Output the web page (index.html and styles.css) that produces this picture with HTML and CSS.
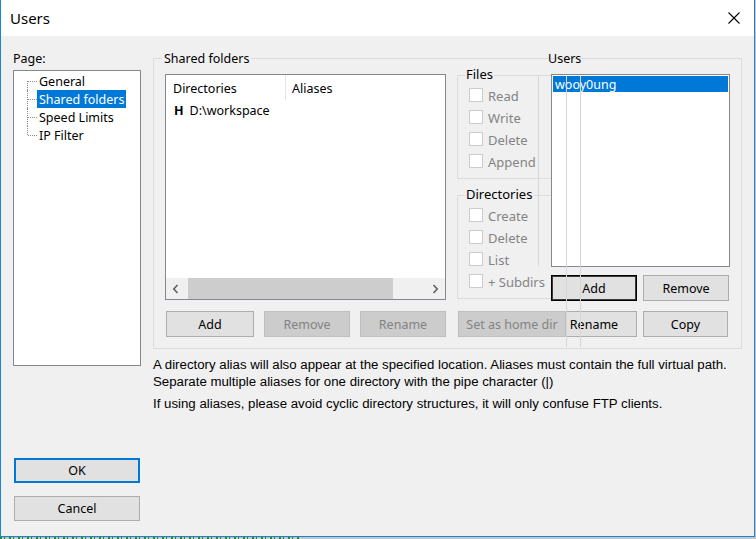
FILE: index.html
```html
<!DOCTYPE html>
<html>
<head>
<meta charset="utf-8">
<title>Users</title>
<link rel="stylesheet" href="styles.css">
</head>
<body>
<div class="window">
  <div class="titlebar">
    <span class="title">Users</span>
    <svg class="close" width="12" height="12" viewBox="0 0 12 12"><path d="M0.5 0.5 L11.5 11.5 M11.5 0.5 L0.5 11.5" stroke="#000" stroke-width="1.1" fill="none"/></svg>
  </div>
  <div class="body">
    <div class="leftcol">
      <div class="page-label">Page:</div>
      <div class="tree">
        <div class="tree-item first"><span class="branch"></span><span class="tree-text">General</span></div>
        <div class="tree-item"><span class="branch"></span><span class="tree-text selected">Shared folders</span></div>
        <div class="tree-item"><span class="branch"></span><span class="tree-text">Speed Limits</span></div>
        <div class="tree-item last"><span class="branch"></span><span class="tree-text">IP Filter</span></div>
      </div>
      <button class="btn btn-ok">OK</button>
      <button class="btn btn-cancel">Cancel</button>
    </div>
    <div class="rightcol">
      <div class="group shared">
        <span class="group-title">Shared folders</span>
        <span class="users-title">Users</span>
        <div class="cols">
          <div class="col-dirs">
            <div class="listview">
              <div class="lv-header">
                <div class="lv-col lv-col1">Directories</div>
                <div class="lv-col lv-col2">Aliases</div>
              </div>
              <div class="lv-row"><b class="home">H</b><span>D:\workspace</span></div>
              <div class="lv-spacer"></div>
              <div class="hscroll">
                <div class="sb-arrow"><svg width="8" height="10" viewBox="0 0 8 10"><path d="M5.5 1 L1.8 5 L5.5 9" stroke="#606060" stroke-width="1.6" fill="none"/></svg></div>
                <div class="sb-thumb"></div>
                <div class="sb-track"></div>
                <div class="sb-arrow"><svg width="8" height="10" viewBox="0 0 8 10"><path d="M2.5 1 L6.2 5 L2.5 9" stroke="#606060" stroke-width="1.6" fill="none"/></svg></div>
              </div>
            </div>
            <div class="btn-row">
              <button class="btn w88">Add</button>
              <button class="btn w86" disabled>Remove</button>
              <button class="btn w86" disabled>Rename</button>
            </div>
          </div>
          <div class="col-perm">
            <div class="group perm files">
              <span class="perm-title">Files</span>
              <div class="checks">
                <div class="check"><span class="box"></span><span class="check-label">Read</span></div>
                <div class="check"><span class="box"></span><span class="check-label">Write</span></div>
                <div class="check"><span class="box"></span><span class="check-label">Delete</span></div>
                <div class="check"><span class="box"></span><span class="check-label">Append</span></div>
              </div>
            </div>
            <div class="group perm dirs">
              <span class="perm-title">Directories</span>
              <div class="checks">
                <div class="check"><span class="box"></span><span class="check-label">Create</span></div>
                <div class="check"><span class="box"></span><span class="check-label">Delete</span></div>
                <div class="check"><span class="box"></span><span class="check-label">List</span></div>
                <div class="check"><span class="box"></span><span class="check-label">+ Subdirs</span></div>
              </div>
            </div>
            <button class="btn btn-home" disabled>Set as home dir</button>
          </div>
          <div class="col-users">
            <div class="users-list">
              <div class="user-item">wooy0ung</div>
            </div>
            <div class="urow">
              <button class="btn w86 btn-default">Add</button>
              <button class="btn w86">Remove</button>
            </div>
            <div class="urow urow2">
              <button class="btn w86">Rename</button>
              <button class="btn w85">Copy</button>
            </div>
          </div>
        </div>
        <span class="glitch g1"></span>
        <span class="glitch g2"></span>
        <span class="glitch g3"></span>
      </div>
      <div class="notes">
        <p>A directory alias will also appear at the specified location. Aliases must contain the full virtual path.<br>Separate multiple aliases for one directory with the pipe character (|)</p>
        <p class="p2">If using aliases, please avoid cyclic directory structures, it will only confuse FTP clients.</p>
      </div>
    </div>
  </div>
</div>
<div class="console"></div>
</body>
</html>
```

FILE: styles.css
```css
* { box-sizing: border-box; }
html, body { margin: 0; padding: 0; }
body {
  width: 756px;
  height: 539px;
  overflow: hidden;
  background: #c6c6c6;
  font-family: "Noto Sans", "Liberation Sans", sans-serif;
  font-size: 12.5px;
  color: #000;
}
.window {
  width: 755px;
  height: 537px;
  border: 1px solid #1883d7;
  border-top: none;
  background: #f0f0f0;
  display: flex;
  flex-direction: column;
}
.titlebar {
  height: 36px;
  flex: 0 0 36px;
  background: #fff;
  display: flex;
  align-items: center;
  justify-content: space-between;
  padding: 0 14px 0 9px;
}
.title { font-size: 15px; line-height: 20px; }
.close { display: block; }

.body {
  flex: 1;
  display: flex;
  padding: 14px 0 0 12px;
}
.leftcol {
  width: 128px;
  margin-right: 12px;
  display: flex;
  flex-direction: column;
  align-items: flex-start;
}
.page-label { height: 17px; line-height: 16px; padding-top: 1px; }
.tree {
  margin-top: 3px;
  width: 128px;
  height: 296px;
  background: #fff;
  border: 1px solid #828790;
  padding-top: 1px;
}
.tree-item {
  height: 18px;
  display: flex;
  align-items: center;
  padding-left: 13px;
}
.branch {
  position: relative;
  width: 10px;
  height: 18px;
  flex: 0 0 10px;
}
.branch::before {
  content: "";
  position: absolute;
  left: 0; top: 0; bottom: 0;
  border-left: 1px dotted #8a8a8a;
}
.tree-item.first .branch::before { top: 9px; }
.tree-item.last .branch::before { bottom: 9px; }
.branch::after {
  content: "";
  position: absolute;
  left: 1px; top: 9px;
  width: 9px;
  border-top: 1px dotted #8a8a8a;
}
.tree-text {
  padding: 1px 2px 0;
  line-height: 17px;
  height: 18px;
  white-space: nowrap;
}
.tree-text.selected { background: #0078d7; color: #fff; }

.btn {
  position: relative;
  z-index: 2;
  font-family: "Noto Sans", "Liberation Sans", sans-serif;
  font-size: 12.5px;
  color: #000;
  background: #e1e1e1;
  border: 1px solid #adadad;
  height: 26px;
  padding: 2px 0 0;
  margin: 0;
  line-height: 1;
}
.btn:disabled { background: #cccccc; border-color: #bfbfbf; color: #838383; }
.btn-ok {
  width: 126px;
  height: 25px;
  margin: 92px 0 0 1px;
  border: 2px solid #0078d7;
}
.btn-cancel {
  width: 126px;
  height: 25px;
  margin: 13px 0 0 1px;
}
.btn-default { border: 1px solid #000; box-shadow: inset 0 0 0 1px #3a3a3a; }
.w88 { width: 88px; }
.w86 { width: 86px; }
.w85 { width: 85px; }

.rightcol { width: 589px; display: flex; flex-direction: column; }
.group { border: 1px solid #dcdcdc; position: relative; }
.shared {
  margin-top: 8px;
  height: 291px;
  padding: 15px 0 0 11px;
}
.group-title {
  position: absolute;
  top: -8px;
  left: 8px;
  padding: 0 2px;
  background: #f0f0f0;
  line-height: 16px;
  white-space: nowrap;
}
.users-title {
  position: absolute;
  top: -8px;
  left: 394px;
  line-height: 16px;
  z-index: 4;
}
.cols { display: flex; align-items: flex-start; }

.col-dirs { width: 281px; flex: 0 0 281px; }
.listview {
  height: 226px;
  background: #fff;
  border: 1px solid #828790;
  display: flex;
  flex-direction: column;
}
.lv-header { height: 25px; display: flex; }
.lv-col { line-height: 22px; padding-top: 3px; height: 25px; white-space: nowrap; }
.lv-col1 { width: 120px; padding-left: 7px; border-right: 1px solid #e5e5e5; }
.lv-col2 { padding-left: 6px; }
.lv-row { height: 21px; line-height: 21px; padding-left: 8px; display: flex; white-space: nowrap; }
.lv-row .home { font-weight: bold; margin-right: 6px; }
.lv-spacer { flex: 1; }
.hscroll { height: 21px; display: flex; background: #f0f0f0; }
.sb-arrow { width: 20px; flex: 0 0 20px; display: flex; align-items: center; justify-content: center; }
.sb-thumb { width: 205px; margin-left: 2px; background: #cdcdcd; }
.sb-track { flex: 1; }
.btn-row { margin-top: 11px; padding-left: 1px; display: flex; gap: 10px; }

.col-perm { width: 110px; flex: 0 0 110px; margin-left: 11px; display: flex; flex-direction: column; align-items: flex-start; }
.perm { width: 110px; height: 104px; padding: 12px 0 0 11px; }
.files { margin-top: 1px; }
.dirs { margin-top: 16px; }
.perm-title {
  position: absolute;
  top: -10px;
  left: 7px;
  padding: 0 1px;
  background: #f0f0f0;
  line-height: 16px;
  font-size: 13px;
}
.checks { display: flex; flex-direction: column; gap: 8px; }
.check { display: flex; align-items: center; height: 14px; white-space: nowrap; position: relative; z-index: 1; }
.box { width: 14px; height: 14px; flex: 0 0 14px; border: 1px solid #cccccc; background: #fff; }
.check-label { margin-left: 5px; color: #838383; font-size: 13px; line-height: 16px; padding-top: 2px; }
.btn-home { width: 108px; margin: 12px 0 0 1px; z-index: 3; }

.col-users { width: 179px; flex: 0 0 179px; margin-left: -16px; position: relative; z-index: 1; }
.users-list { height: 193px; background: #fff; border: 1px solid #828790; padding: 1px; }
.user-item { height: 16px; line-height: 16px; padding-top: 1px; background: #0078d7; color: #fff; padding-left: 2px; }
.urow { display: flex; gap: 6px; margin-top: 8px; }
.urow2 { margin-top: 10px; }

.glitch {
  position: absolute;
  width: 1px;
  background: #d6d6d6;
  z-index: 1;
}
.g1 { left: 384px; top: 16px; height: 191px; }
.g2 { left: 412px; top: 16px; height: 272px; }
.g3 { left: 426px; top: 16px; height: 272px; }

.notes { font-family: "Liberation Sans", Arial, sans-serif; font-size: 13.25px; line-height: 17px; margin-top: 7px; white-space: nowrap; }
.notes p { margin: 0; }
.notes .p2 { margin-top: 5px; }

.console {
  height: 2px;
  background: repeating-linear-gradient(90deg, #2a8a2a 0 2px, #c6c6c6 2px 4px, #2a8a2a 4px 5px, #c6c6c6 5px 9px);
  width: 300px;
}
```
